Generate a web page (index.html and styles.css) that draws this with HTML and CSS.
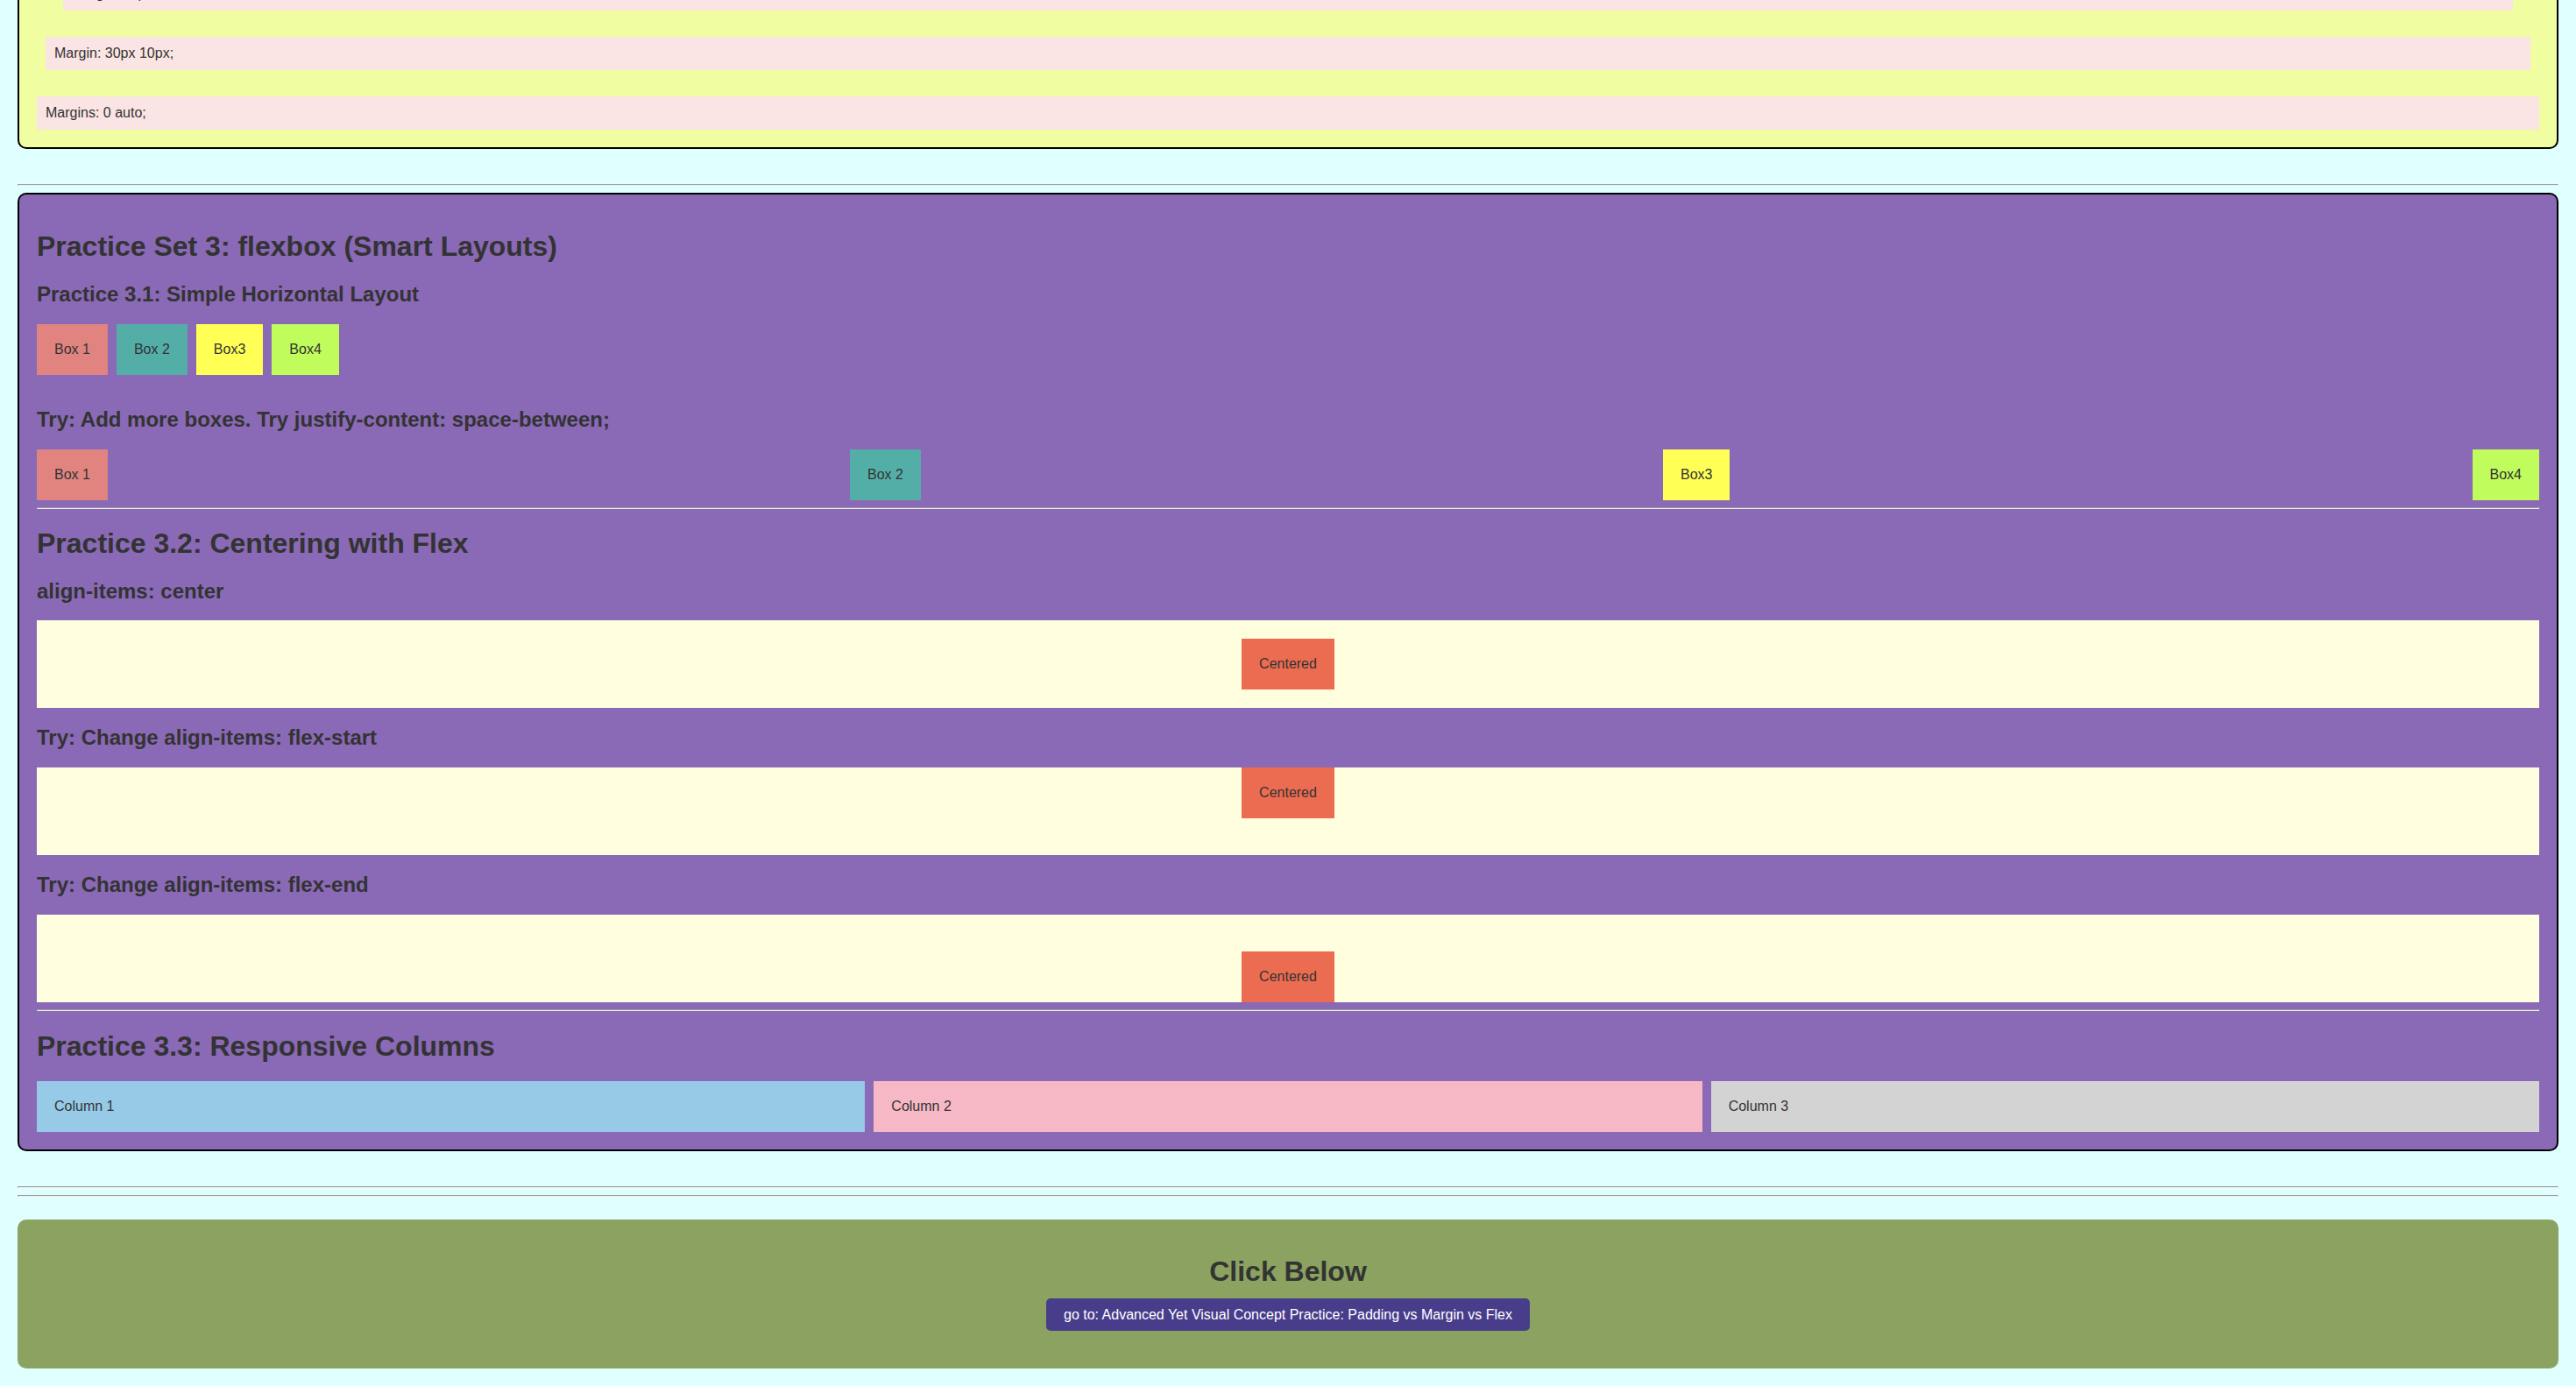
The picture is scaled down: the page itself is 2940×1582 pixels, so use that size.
FILE: index.html
```html
<!DOCTYPE html>
<html lang="en">
<head>
<meta charset="utf-8">
<title>CSS Practice: Margin, Flexbox</title>
<link rel="stylesheet" href="styles.css">
</head>
<body>
<section class="card card-margin">
  <div class="demo demo-m30">Margin: 30px;</div>
  <div class="demo demo-m30-10">Margin: 30px 10px;</div>
  <div class="demo demo-auto">Margins: 0 auto;</div>
</section>

<hr>

<section class="card card-flex">
  <h1>Practice Set 3: flexbox (Smart Layouts)</h1>

  <h2>Practice 3.1: Simple Horizontal Layout</h2>
  <div class="row row-simple">
    <div class="box box-1">Box 1</div>
    <div class="box box-2">Box 2</div>
    <div class="box box-3">Box3</div>
    <div class="box box-4">Box4</div>
  </div>

  <h2>Try: Add more boxes. Try justify-content: space-between;</h2>
  <div class="row row-between">
    <div class="box box-1">Box 1</div>
    <div class="box box-2">Box 2</div>
    <div class="box box-3">Box3</div>
    <div class="box box-4">Box4</div>
  </div>

  <hr>

  <h1>Practice 3.2: Centering with Flex</h1>
  <h2>align-items: center</h2>
  <div class="stage stage-center">
    <div class="centered">Centered</div>
  </div>

  <h2>Try: Change align-items: flex-start</h2>
  <div class="stage stage-start">
    <div class="centered">Centered</div>
  </div>

  <h2>Try: Change align-items: flex-end</h2>
  <div class="stage stage-end">
    <div class="centered">Centered</div>
  </div>

  <hr>

  <h1>Practice 3.3: Responsive Columns</h1>
  <div class="columns">
    <div class="col col-1">Column 1</div>
    <div class="col col-2">Column 2</div>
    <div class="col col-3">Column 3</div>
  </div>
</section>

<hr>
<hr>

<section class="cta-card">
  <h1>Click Below</h1>
  <p class="cta-line"><a class="cta-btn" href="#">go to: Advanced Yet Visual Concept Practice: Padding vs Margin vs Flex</a></p>
</section>
</body>
</html>
```

FILE: styles.css
```css
body {
  margin: 0 20px 20px;
  background: #e0ffff;
  font-family: "Liberation Sans", Arial, sans-serif;
  font-size: 16px;
  color: #333;
}

h1 {
  font-size: 32px;
  margin: 0.67em 0;
}

h2 {
  font-size: 24px;
  margin: 0.83em 0;
}

.card {
  border: 2px solid #000;
  border-radius: 10px;
  padding: 20px;
  margin: 8px 0 40px;
}

.card-margin {
  background: #f0fda0;
  margin-top: -78px;
}

.card-flex {
  background: #8a69b6;
}

.demo {
  background: #fae4e4;
  padding: 10px;
}

.demo-m30 {
  margin: 30px;
}

.demo-m30-10 {
  margin: 30px 10px;
}

.demo-auto {
  margin: 0 auto;
}

.row {
  display: flex;
  gap: 10px;
}

.row-simple {
  margin-bottom: 37px;
}

.row-between {
  justify-content: space-between;
}

.box {
  padding: 20px;
}

.box-1 {
  background: #e1847f;
}

.box-2 {
  background: #54aea8;
}

.box-3 {
  background: #ffff55;
}

.box-4 {
  background: #c0fc5c;
}

.stage {
  display: flex;
  justify-content: center;
  height: 100px;
  background: #ffffe0;
}

.stage-center {
  align-items: center;
}

.stage-start {
  align-items: flex-start;
}

.stage-end {
  align-items: flex-end;
}

.centered {
  background: #ec6c51;
  padding: 20px;
}

.columns {
  display: flex;
  gap: 10px;
}

.col {
  flex: 1;
  padding: 20px;
}

.col-1 {
  background: #96cae7;
}

.col-2 {
  background: #f5b8c4;
}

.col-3 {
  background: #d3d3d3;
}

.cta-card {
  background: #8ba260;
  border-radius: 10px;
  padding: 20px;
  margin-top: 26px;
  text-align: center;
}

.cta-line {
  margin: 0 0 32px;
}

.cta-btn {
  background: #483d8b;
  color: #fff;
  padding: 10px 20px;
  border-radius: 5px;
  text-decoration: none;
}
```
